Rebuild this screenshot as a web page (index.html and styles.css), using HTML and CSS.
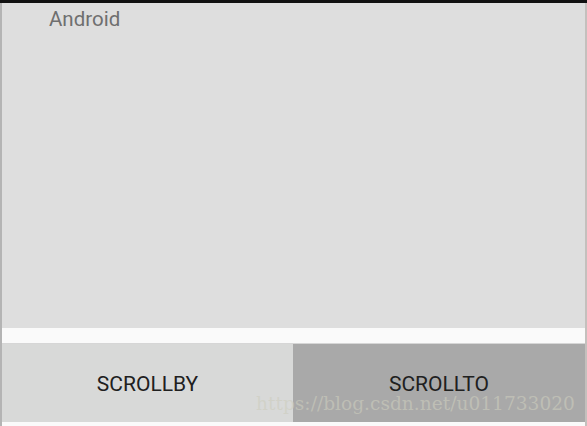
FILE: index.html
```html
<!DOCTYPE html>
<html lang="en">
<head>
  <meta charset="UTF-8" />
  <title>Scroll demo</title>
  <link rel="stylesheet" href="styles.css">
</head>
<body>
  <div class="screen">
    <div class="status"></div>
    <div class="frame">
      <div class="scroll-area">
        <div class="label">Android</div>
      </div>
      <div class="gap"></div>
      <div class="buttons">
        <button class="btn by">SCROLLBY</button>
        <button class="btn to">SCROLLTO</button>
      </div>
      <div class="foot"></div>
    </div>
    <div class="watermark">https://blog.csdn.net/u011733020</div>
  </div>
</body>
</html>
```

FILE: styles.css
```css
body {
  margin: 0;
  font-family: Roboto, 'Noto Sans', sans-serif;
  background: #fafafa;
}

.screen {
  position: relative;
  width: 587px;
  height: 426px;
  overflow: hidden;
  display: flex;
  flex-direction: column;
}

.status {
  height: 3px;
  background: #111;
}

.frame {
  flex: 1;
  display: flex;
  flex-direction: column;
  border-left: 2px solid #b4b4b4;
  border-right: 2px solid #c4c0bd;
}

.scroll-area {
  height: 325px;
  background: #dedede;
}

.label {
  padding: 4px 0 0 47px;
  font-size: 20.5px;
  color: #6f6f6f;
  line-height: 24px;
}

.gap {
  height: 15px;
  background: #fafafa;
  border-bottom: 1px solid #d6d6d6;
}

.buttons {
  display: flex;
  height: 78px;
}

.btn {
  flex: 1;
  border: none;
  margin: 0;
  padding: 0;
  font-family: Roboto, 'Noto Sans', sans-serif;
  font-size: 21px;
  color: #202020;
  line-height: 80px;
}

.btn.by {
  background: #d8d9d8;
  flex: 0 0 291px;
}

.btn.to {
  background: #a9a9a9;
}

.foot {
  flex: 1;
  background: #fafafa;
}

.watermark {
  position: absolute;
  left: 256px;
  top: 393px;
  font-family: 'DejaVu Serif', serif;
  font-size: 18.6px;
  color: rgba(205, 205, 190, 0.6);
  white-space: nowrap;
}
```
